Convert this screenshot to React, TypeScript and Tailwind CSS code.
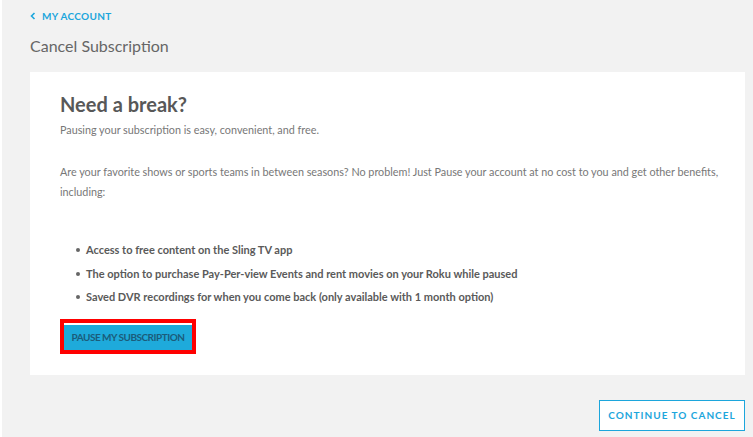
const BENEFITS = [
  "Access to free content on the Sling TV app",
  "The option to purchase Pay-Per-view Events and rent movies on your Roku while paused",
  "Saved DVR recordings for when you come back (only available with 1 month option)",
];

export default function App() {
  return (
    <div className="w-[753px] h-[437px] bg-white pl-[2px] font-['Lato',sans-serif]">
      <div className="h-full bg-[#f2f2f2] pl-[28px] pr-[8px] pt-[9px]">
        <a className="flex items-center gap-[6px] text-[10px] font-bold tracking-[0.3px] text-[#1ca6dc] h-[14px]">
          <svg width="6" height="8" viewBox="0 0 6 8" fill="none">
            <path d="M4.5 1 L1.5 4 L4.5 7" stroke="#1ca6dc" strokeWidth="1.6" />
          </svg>
          MY ACCOUNT
        </a>
        <h1 className="mt-[13px] text-[16px] leading-[20px] text-[#666]">Cancel Subscription</h1>

        <div className="mt-[16px] bg-white h-[303px] pl-[30px] pr-[10px] pt-[19px]">
          <h2 className="text-[20px] leading-[26px] font-bold text-[#585858]">Need a break?</h2>
          <p className="mt-[6px] text-[10.8px] leading-[14px] text-[#777]">
            Pausing your subscription is easy, convenient, and free.
          </p>
          <p className="mt-[25px] text-[10.8px] leading-[20px] text-[#777]">
            Are your favorite shows or sports teams in between seasons? No problem! Just Pause your account at no cost to you and get other benefits, including:
          </p>
          <ul className="mt-[41px] pl-[16px] flex flex-col gap-[9.5px]">
            {BENEFITS.map((b) => (
              <li key={b} className="flex items-center gap-[6px] text-[11px] leading-[14px] font-bold text-[#5a5a5a]">
                <span className="w-[4px] h-[4px] rounded-full bg-[#666]" />
                {b}
              </li>
            ))}
          </ul>
          <div className="mt-[15px] inline-block border-[4px] border-[#ff0000]">
            <button
              type="button"
              className="w-[128px] h-[25px] bg-[#1eaadb] text-[10px] font-bold tracking-[-0.5px] text-[#1b5c7a]"
            >
              PAUSE MY SUBSCRIPTION
            </button>
          </div>
        </div>

        <div className="flex justify-end mt-[25px]">
          <button
            type="button"
            className="w-[146px] h-[31px] border border-[#1ca6dc] bg-white text-[10px] font-bold tracking-[1px] text-[#1ca6dc]"
          >
            CONTINUE TO CANCEL
          </button>
        </div>
      </div>
    </div>
  );
}
